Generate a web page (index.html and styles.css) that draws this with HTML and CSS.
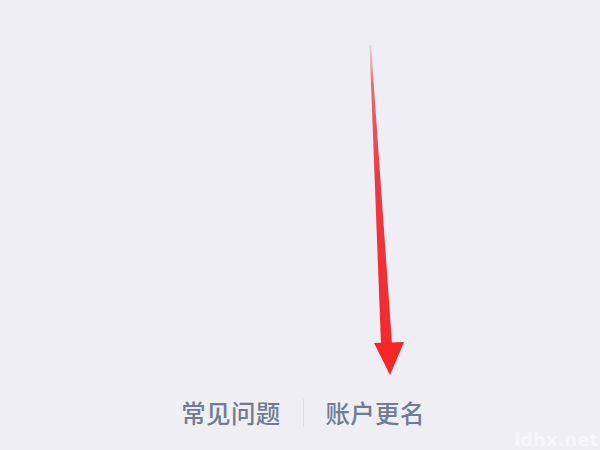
FILE: index.html
```html
<!DOCTYPE html>
<html lang="zh">
<head>
<meta charset="utf-8">
<link rel="stylesheet" href="styles.css">
</head>
<body>
<div class="page">
  <div class="spacer"></div>
  <div class="footer">
    <span class="link">常见问题</span>
    <span class="divider"></span>
    <span class="link">账户更名</span>
  </div>
  <svg class="arrow" width="600" height="450" viewBox="0 0 600 450">
    <defs>
      <linearGradient id="g" x1="0" y1="45" x2="0" y2="375" gradientUnits="userSpaceOnUse">
        <stop offset="0" stop-color="#f4d0d4"/>
        <stop offset="0.12" stop-color="#e86a72"/>
        <stop offset="0.4" stop-color="#ea3a44"/>
        <stop offset="1" stop-color="#f52628"/>
      </linearGradient>
    </defs>
    <polygon points="369.5,45 371,45 392,344 381,344" fill="url(#g)"/>
    <polygon points="374,343 404,342 390,375" fill="#f52628"/>
  </svg>
  <div class="watermark">ldhx.net</div>
</div>
</body>
</html>
```
FILE: styles.css
```css
html, body {
  margin: 0;
  padding: 0;
  background: #efeef4;
}
.page {
  position: relative;
  width: 600px;
  height: 450px;
  display: flex;
  flex-direction: column;
  overflow: hidden;
  font-family: "Noto Sans CJK SC", "Noto Sans", sans-serif;
}
.spacer {
  flex: 1;
}
.footer {
  display: flex;
  justify-content: center;
  align-items: center;
  gap: 22px;
  padding: 0 0 23px 6px;
}
.link {
  font-size: 24.5px;
  font-weight: 500;
  line-height: 28px;
  color: #737b94;
  letter-spacing: 0.3px;
}
.divider {
  width: 1px;
  height: 28px;
  background: #dfdfe6;
}
.arrow {
  position: absolute;
  left: 0;
  top: 0;
}
.watermark {
  position: absolute;
  right: 2px;
  bottom: 0;
  font-family: "DejaVu Sans", sans-serif;
  font-size: 18px;
  line-height: 20px;
  font-weight: bold;
  color: #f6f6fa;
}
```
